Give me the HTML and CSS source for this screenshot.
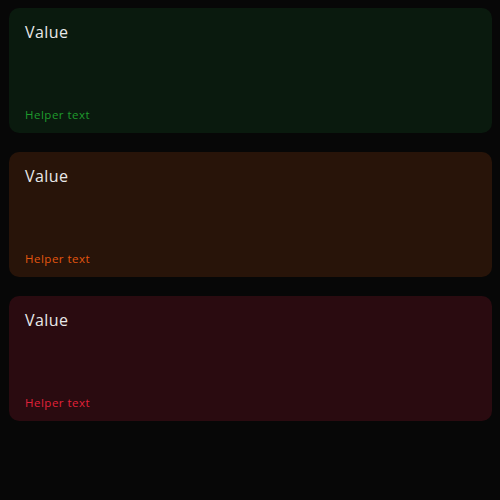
FILE: index.html
```html
<!DOCTYPE html>
<html>
<head>
<meta charset="utf-8">
<link rel="stylesheet" href="styles.css">
</head>
<body>
<div class="stack">
  <div class="field field-success">
    <div class="value">Value</div>
    <div class="helper">Helper text</div>
  </div>
  <div class="field field-warning">
    <div class="value">Value</div>
    <div class="helper">Helper text</div>
  </div>
  <div class="field field-error">
    <div class="value">Value</div>
    <div class="helper">Helper text</div>
  </div>
</div>
</body>
</html>
```

FILE: styles.css
```css
html, body {
  margin: 0;
  background: #070707;
}
body {
  padding: 8px 8px 8px 9px;
  font-family: "Open Sans", "Noto Sans", sans-serif;
}
.stack {
  display: flex;
  flex-direction: column;
  gap: 19px;
}
.field {
  box-sizing: border-box;
  height: 125px;
  border-radius: 10px;
  padding: 12px 16px 10px 16px;
  display: flex;
  flex-direction: column;
  justify-content: space-between;
}
.value {
  font-size: 16px;
  line-height: 24px;
  letter-spacing: 0.4px;
  color: #e8e8e8;
}
.helper {
  font-size: 11.5px;
  line-height: 16px;
  letter-spacing: 0.5px;
}
.field-success { background: #0a1a0e; }
.field-success .helper { color: #1f9a2d; }
.field-warning { background: #281409; }
.field-warning .helper { color: #e4560f; }
.field-error { background: #2a0b10; }
.field-error .helper { color: #e2223a; }
```
